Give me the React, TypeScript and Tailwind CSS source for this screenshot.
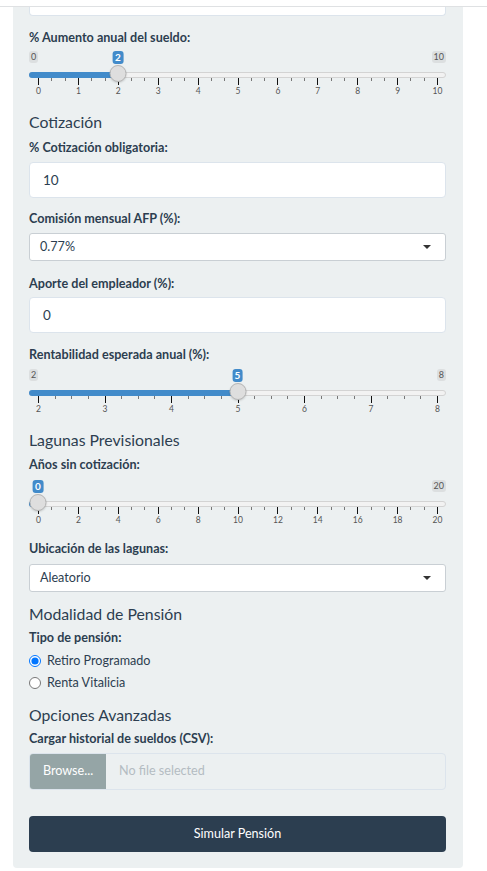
import React from 'react'

const font = { fontFamily: 'Lato, "Noto Sans", sans-serif' }

type SliderProps = { min: number; max: number; value: number; step: number; minor: number }

function Slider({ min, max, value, step, minor }: SliderProps) {
  const gridLeft = 9
  const gridWidth = 399
  const frac = (value - min) / (max - min)
  const handleX = gridLeft + frac * gridWidth
  const intervals = ((max - min) / step) * minor
  const ticks = Array.from({ length: intervals + 1 }, (_, i) => i)

  return (
    <div className="relative h-[46px]">
      {value !== min && (
        <span className="absolute left-0 top-0 h-[12px] rounded-[3px] bg-[#dcdfe0] px-[2px] text-[9px] leading-[12px] text-[#555]">
          {min}
        </span>
      )}
      <span className="absolute right-0 top-0 h-[12px] rounded-[3px] bg-[#dcdfe0] px-[2px] text-[9px] leading-[12px] text-[#555]">
        {max}
      </span>
      <span
        className="absolute top-0 h-[13px] -translate-x-1/2 rounded-[3px] bg-[#428bca] px-[2.5px] text-[10px] font-bold leading-[13px] text-white"
        style={{ left: handleX }}
      >
        {value}
      </span>

      <div className="absolute inset-x-0 top-[21px] h-[6px] rounded-full border border-[#d3d3d3] bg-[#f2f2f2]" />
      <div className="absolute left-0 top-[21px] h-[6px] rounded-l-full bg-[#428bca]" style={{ width: handleX }} />

      {ticks.map((i) => {
        const major = i % minor === 0
        const x = gridLeft + (i / intervals) * gridWidth
        return (
          <React.Fragment key={i}>
            <span
              className={major ? 'absolute top-[27px] h-[7px] w-px bg-[#111]' : 'absolute top-[27px] h-[3px] w-px bg-[#777]'}
              style={{ left: x }}
            />
            {major && (
              <span
                className="absolute top-[35px] -translate-x-1/2 text-[8.5px] leading-[11px] text-[#555]"
                style={{ left: x + 0.5 }}
              >
                {min + (i / minor) * step}
              </span>
            )}
          </React.Fragment>
        )
      })}

      <span
        className="absolute top-[14px] h-[17px] w-[17px] -translate-x-1/2 rounded-full border border-[#b5b5b5] bg-[#dedede] shadow-[0_1px_2px_rgba(0,0,0,0.15)]"
        style={{ left: handleX }}
      />
    </div>
  )
}

function Label({ text, className = '' }: { text: string; className?: string }) {
  return <div className={`h-5 text-[12.6px] font-bold leading-5 ${className}`}>{text}</div>
}

function Heading({ text, className = '' }: { text: string; className?: string }) {
  return <div className={`h-5 text-[15.8px] leading-5 ${className}`}>{text}</div>
}

function TextBox({ value, className = '' }: { value: string; className?: string }) {
  return (
    <div className={`flex h-9 items-center rounded-[4px] border border-[#dce4ec] bg-white px-[13px] text-[13.5px] ${className}`}>
      {value}
    </div>
  )
}

function SelectBox({ value, className = '' }: { value: string; className?: string }) {
  return (
    <div className={`flex h-7 items-center justify-between rounded-[3px] border border-[#c9cfd4] bg-white pl-[10px] pr-[14px] text-[12.6px] ${className}`}>
      <span>{value}</span>
      <svg width="8" height="4" viewBox="0 0 8 4">
        <polygon points="0,0 8,0 4,4" fill="#333" />
      </svg>
    </div>
  )
}

function Radio({ label, checked }: { label: string; checked?: boolean }) {
  return (
    <label className="flex h-[22px] items-center gap-[6px] text-[12.6px]">
      <input type="radio" name="tipo" defaultChecked={checked} className="m-0 h-[12px] w-[12px] accent-[#0075ff]" />
      <span>{label}</span>
    </label>
  )
}

export default function App() {
  return (
    <div className="min-h-[871px] bg-white text-[#2c3e50]" style={font}>
      <div className="h-[7px] border-b border-[#dfe1e3] bg-white" />
      <div className="ml-[13px] w-[450px] rounded-b-[4px] bg-[#ecf0f1] pb-4 pl-4 pr-[17px]">
        <div className="h-[9px] rounded-b-[4px] border-x border-b border-[#dce4ec] bg-white" />

        <Label text="% Aumento anual del sueldo:" className="mt-[12px]" />
        <div className="mt-[3px]">
          <Slider min={0} max={10} value={2} step={1} minor={3} />
        </div>

        <Heading text="Cotización" className="mt-[15px]" />
        <Label text="% Cotización obligatoria:" className="mt-[6px]" />
        <TextBox value="10" className="mt-1" />

        <Label text="Comisión mensual AFP (%):" className="mt-[11px]" />
        <SelectBox value="0.77%" className="mt-1" />

        <Label text="Aporte del empleador (%):" className="mt-[13px]" />
        <TextBox value="0" className="mt-[3px]" />

        <Label text="Rentabilidad esperada anual (%):" className="mt-[12px]" />
        <div className="mt-1">
          <Slider min={2} max={8} value={5} step={1} minor={4} />
        </div>

        <Heading text="Lagunas Previsionales" className="mt-[15px]" />
        <Label text="Años sin cotización:" className="mt-[5px]" />
        <div className="mt-[5px]">
          <Slider min={0} max={20} value={0} step={2} minor={3} />
        </div>

        <Label text="Ubicación de las lagunas:" className="mt-[13px]" />
        <SelectBox value="Aleatorio" className="mt-[5px]" />

        <Heading text="Modalidad de Pensión" className="mt-[12px]" />
        <Label text="Tipo de pensión:" className="mt-[4px]" />
        <div className="mt-[2px]">
          <Radio label="Retiro Programado" checked />
          <Radio label="Renta Vitalicia" />
        </div>

        <Heading text="Opciones Avanzadas" className="mt-[11px]" />
        <Label text="Cargar historial de sueldos (CSV):" className="mt-[4px]" />
        <div className="mt-1 flex h-[37px] overflow-hidden rounded-[4px] border border-[#dce4ec] bg-[#ecf0f1] text-[12.6px]">
          <button className="w-[76px] bg-[#95a5a6] text-white">Browse...</button>
          <span className="flex items-center pl-[13px] text-[#b4bcc2]">No file selected</span>
        </div>

        <button className="mt-[26px] h-9 w-full rounded-[4px] bg-[#2c3e50] text-[12.6px] text-white">Simular Pensión</button>
      </div>
    </div>
  )
}
